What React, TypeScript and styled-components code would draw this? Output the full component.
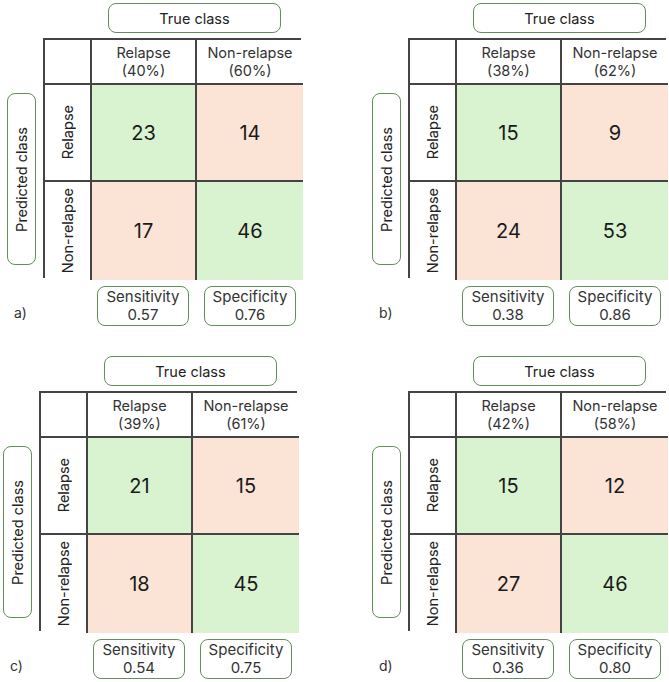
import React from 'react';
import styled, { createGlobalStyle } from 'styled-components';

// ============================================
// DATA
// ============================================

interface IMatrix {
  tag: string;
  relapsePct: string;
  nonRelapsePct: string;
  tp: number;
  fp: number;
  fn: number;
  tn: number;
  sensitivity: string;
  specificity: string;
  shift: number;
}

const MATRICES: IMatrix[] = [
  { tag: 'a)', relapsePct: '40%', nonRelapsePct: '60%', tp: 23, fp: 14, fn: 17, tn: 46, sensitivity: '0.57', specificity: '0.76', shift: 0 },
  { tag: 'b)', relapsePct: '38%', nonRelapsePct: '62%', tp: 15, fp: 9, fn: 24, tn: 53, sensitivity: '0.38', specificity: '0.86', shift: 0 },
  { tag: 'c)', relapsePct: '39%', nonRelapsePct: '61%', tp: 21, fp: 15, fn: 18, tn: 45, sensitivity: '0.54', specificity: '0.75', shift: -4 },
  { tag: 'd)', relapsePct: '42%', nonRelapsePct: '58%', tp: 15, fp: 12, fn: 27, tn: 46, sensitivity: '0.36', specificity: '0.80', shift: 0 },
];

// ============================================
// STYLED COMPONENTS
// ============================================

const GlobalStyle = createGlobalStyle`
  html, body {
    margin: 0;
    padding: 0;
    background: #ffffff;
  }
  body {
    font-family: Inter, 'Liberation Sans', sans-serif;
    color: #222222;
  }
`;

const Page = styled.div`
  width: 669px;
  height: 682px;
  display: grid;
  grid-template-columns: 365px 304px;
  grid-template-rows: 353px 329px;
  overflow: hidden;
`;

const Panel = styled.div<{ $shift: number }>`
  display: grid;
  grid-template-columns: 43px 258px;
  grid-template-rows: 38px 240px auto;
  margin-left: ${(props) => props.$shift}px;
`;

const Pill = styled.div`
  border: 1.5px solid #62905a;
  border-radius: 8px;
  background: #ffffff;
  box-sizing: border-box;
  display: flex;
  align-items: center;
  justify-content: center;
  text-align: center;
  color: #222222;
`;

const TrueClass = styled(Pill)`
  grid-column: 2;
  grid-row: 1;
  margin: 3px 0 0 65px;
  width: 173px;
  height: 30px;
  font-size: 14.5px;
`;

const PredictedClass = styled(Pill)`
  grid-column: 1;
  grid-row: 2;
  margin: 55px 0 0 7px;
  width: 29px;
  height: 172px;
  font-size: 14.5px;
  white-space: nowrap;

  span {
    writing-mode: vertical-rl;
    transform: rotate(180deg);
  }
`;

const Matrix = styled.div`
  grid-column: 2;
  grid-row: 2;
  display: grid;
  grid-template-columns: 47px 105px 106px;
  grid-template-rows: 45px 97px 98px;
  border: 2px solid #444444;
  box-sizing: border-box;
`;

const Cell = styled.div<{ $tone?: 'hit' | 'miss' }>`
  display: flex;
  align-items: center;
  justify-content: center;
  text-align: center;
  border-right: 2px solid #444444;
  border-bottom: 2px solid #444444;
  background: ${(props) =>
    props.$tone === 'hit' ? '#d9f2d0' : props.$tone === 'miss' ? '#fbe3d6' : '#ffffff'};

  &:nth-child(3n) {
    border-right: none;
  }
  &:nth-child(n + 7) {
    border-bottom: none;
  }
`;

const HeadText = styled.div`
  font-size: 14.5px;
  line-height: 18px;
  color: #333333;
`;

const SideText = styled.span`
  font-size: 14.5px;
  writing-mode: vertical-rl;
  transform: rotate(180deg);
  white-space: nowrap;
  color: #222222;
`;

const Count = styled.span`
  font-size: 20px;
  color: #1a1a1a;
`;

const Footer = styled.div`
  grid-column: 1 / span 2;
  grid-row: 3;
  display: grid;
  grid-template-columns: 43px 258px;
  padding-top: 8px;
`;

const Tag = styled.div`
  font-size: 14px;
  padding: 18px 0 0 14px;
  color: #333333;
`;

const Metrics = styled.div`
  display: flex;
  gap: 15px;
  padding-left: 54px;
`;

const MetricBox = styled(Pill)`
  width: 92px;
  height: 40px;
  flex-direction: column;
  font-size: 15px;
  line-height: 18px;
  color: #333333;
`;

// ============================================
// COMPONENTS
// ============================================

const ConfusionPanel: React.FC<{ m: IMatrix }> = ({ m }) => (
  <Panel $shift={m.shift}>
    <TrueClass>True class</TrueClass>
    <PredictedClass>
      <span>Predicted class</span>
    </PredictedClass>
    <Matrix>
      <Cell />
      <Cell>
        <HeadText>
          Relapse
          <br />({m.relapsePct})
        </HeadText>
      </Cell>
      <Cell>
        <HeadText>
          Non-relapse
          <br />({m.nonRelapsePct})
        </HeadText>
      </Cell>
      <Cell>
        <SideText>Relapse</SideText>
      </Cell>
      <Cell $tone="hit">
        <Count>{m.tp}</Count>
      </Cell>
      <Cell $tone="miss">
        <Count>{m.fp}</Count>
      </Cell>
      <Cell>
        <SideText>Non-relapse</SideText>
      </Cell>
      <Cell $tone="miss">
        <Count>{m.fn}</Count>
      </Cell>
      <Cell $tone="hit">
        <Count>{m.tn}</Count>
      </Cell>
    </Matrix>
    <Footer>
      <Tag>{m.tag}</Tag>
      <Metrics>
        <MetricBox>
          <div>Sensitivity</div>
          <div>{m.sensitivity}</div>
        </MetricBox>
        <MetricBox>
          <div>Specificity</div>
          <div>{m.specificity}</div>
        </MetricBox>
      </Metrics>
    </Footer>
  </Panel>
);

export default function App() {
  return (
    <>
      <GlobalStyle />
      <Page>
        {MATRICES.map((m) => (
          <ConfusionPanel key={m.tag} m={m} />
        ))}
      </Page>
    </>
  );
}
